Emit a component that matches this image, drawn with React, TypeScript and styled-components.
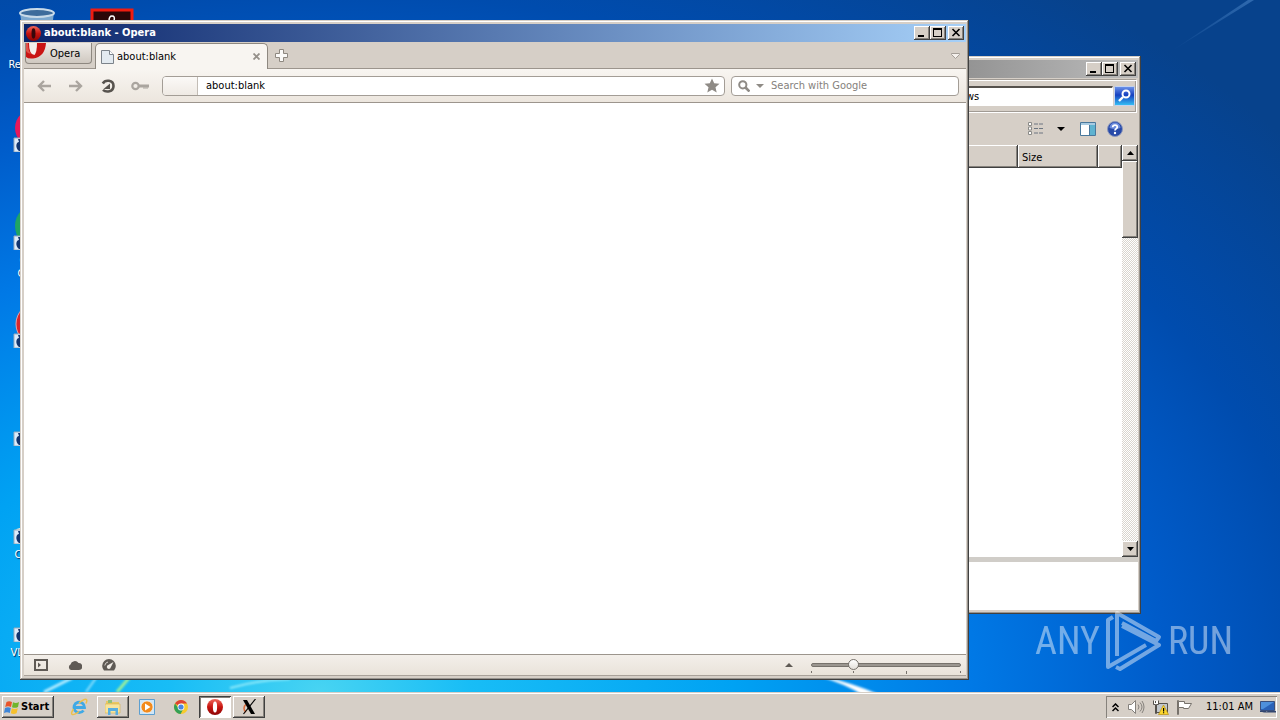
import React from "react";
import styled, { createGlobalStyle, css } from "styled-components";

const Global = createGlobalStyle`
  * { box-sizing: border-box; }
  body {
    margin: 0;
    font: 11px/14px "DejaVu Sans Condensed", Tahoma, "Liberation Sans", sans-serif;
    color: #000;
  }
  button, input { font: inherit; color: inherit; margin: 0; padding: 0; border: 0; outline: 0; border-radius: 0; }
  button { background: none; }
  svg { display: block; flex: none; }
`;

const face = "#d6cfc7";

const raised = css`
  background: ${face};
  box-shadow: inset -1px -1px #404040, inset 1px 1px #fff, inset -2px -2px #86827c;
`;

/* ---------- desktop ---------- */

const Desktop = styled.div`
  height: 100vh;
  display: flex;
  flex-direction: column;
  overflow: hidden;
`;

const Surface = styled.main`
  flex: 1;
  position: relative;
  background: radial-gradient(ellipse 1250px 875px at 25% 100%,
    #48d4f2 0%, #18bdf6 12%, #00a2f3 33%, #0079e6 52%, #005bc9 68%, #004cae 80%, #07428c 100%);
`;

const Wallpaper = styled.svg`
  position: absolute;
  inset: 0;
  width: 100%;
  height: 100%;
`;

const IconColumn = styled.ul`
  list-style: none;
  margin: 0;
  padding: 6px 0 0;
  width: 74px;
  position: absolute;
  top: 0;
  left: ${(p: { $left: number }) => p.$left}px;
`;

const IconItem = styled.li`
  height: 98px;
  display: flex;
  flex-direction: column;
  align-items: center;
  gap: 4px;
`;

const IconLabel = styled.span`
  width: 62px;
  text-align: center;
  line-height: 13px;
  color: #fff;
  text-shadow: 1px 1px 1px #002a60;
`;

/* ---------- windows ---------- */

const Window = styled.section<{ $inset: string }>`
  position: absolute;
  inset: ${(p) => p.$inset};
  display: flex;
  flex-direction: column;
  padding: 4px 3px 4px 4px;
  background: ${face};
  box-shadow: inset -1px -1px #404040, inset 1px 1px ${face}, inset -2px -2px #98948e, inset 2px 2px #fff;
`;

const TitleBar = styled.header<{ $active?: boolean }>`
  height: 18px;
  display: flex;
  align-items: center;
  gap: 2px;
  padding: 0 2px;
  color: #fff;
  background: ${(p) =>
    p.$active ? "linear-gradient(90deg, #0a246a, #a6d0f8)" : "linear-gradient(90deg, #808080, #bcbcbc)"};
`;

const Title = styled.h1`
  flex: 1;
  margin: 0;
  padding-left: 1px;
  font-size: 11px;
  line-height: 18px;
  font-weight: bold;
`;

const CaptionGroup = styled.div`
  display: flex;
`;

const CaptionButton = styled.button`
  ${raised}
  width: 16px;
  height: 14px;
  display: grid;
  place-items: center;
`;

const TabBar = styled.div`
  height: 27px;
  display: flex;
  padding: 1px 1px 0;
  border-bottom: 1px solid #9c958d;
`;

const MenuButton = styled.button`
  width: 67px;
  height: 21px;
  display: flex;
  gap: 4px;
  border: 1px solid #8e8880;
  border-top: 0;
  border-radius: 0 0 4px 4px;
  background: linear-gradient(#eeebe7, #cfc8c0);
  line-height: 22px;
  overflow: hidden;
`;

const Tab = styled.div`
  width: 173px;
  height: 26px;
  margin: 0 7px 0 3px;
  padding: 0 7px 0 5px;
  display: flex;
  align-items: center;
  gap: 3px;
  border: 1px solid #8e8880;
  border-bottom: 0;
  border-radius: 5px 5px 0 0;
  background: #f8f5f1;
`;

const TabName = styled.span`
  flex: 1;
`;

const PlainButton = styled.button<{ $w: number }>`
  width: ${(p) => p.$w}px;
  display: grid;
  place-items: center;
`;

const Spacer = styled.div`
  flex: 1;
`;

const NavBar = styled.nav`
  height: 34px;
  display: flex;
  align-items: center;
  padding: 0 7px 0 4px;
  border-bottom: 1px solid #9c958d;
  background: linear-gradient(#f8f5f1, #ece6de);
`;

const Field = styled.label<{ $w?: number }>`
  height: 20px;
  margin-left: 6px;
  flex: ${(p) => (p.$w ? `0 0 ${p.$w}px` : "1")};
  display: flex;
  align-items: center;
  border: 1px solid #a39d96;
  border-radius: 4px;
  background: #fff;
  overflow: hidden;
`;

const Badge = styled.span`
  width: 35px;
  align-self: stretch;
  border-right: 1px solid #c3bdb6;
  background: linear-gradient(#fbf9f7, #efeae4);
`;

const FieldInput = styled.input<{ $pad: number }>`
  flex: 1;
  min-width: 0;
  height: 18px;
  padding-left: ${(p) => p.$pad}px;
  background: none;
  &::placeholder { color: #85817c; opacity: 1; }
`;

const Page = styled.div`
  flex: 1;
  background: #fff;
`;

const StatusBar = styled.footer`
  height: 22px;
  display: flex;
  align-items: stretch;
  padding-right: 5px;
  border-top: 1px solid #9c958d;
  border-bottom: 1px solid #a9a29a;
  background: linear-gradient(#f3efea, #e9e3da);
`;

const Zoom = styled.div`
  width: 150px;
  margin-left: 11px;
  display: flex;
  flex-direction: column;
  padding-top: 4px;
`;

const Slider = styled.input`
  appearance: none;
  width: 100%;
  height: 12px;
  background: none;
  &::-webkit-slider-runnable-track {
    height: 4px;
    border-radius: 2px;
    background: #9b9690;
    border: 1px solid #77726c;
  }
  &::-webkit-slider-thumb {
    appearance: none;
    width: 11px;
    height: 11px;
    margin-top: -5px;
    border: 1px solid #77726c;
    border-radius: 50%;
    background: linear-gradient(#fff, #e4e0da);
  }
`;

/* ---------- explorer ---------- */

const AddressRow = styled.div`
  height: 34px;
  margin: 1px 1px 0 0;
  padding: 6px 1px;
  display: flex;
  gap: 1px;
  border: 1px solid #fff;
  border-top-color: #a19b94;
  box-shadow: inset 0 1px #fff, inset -1px -1px #a19b94;
`;

const ExplorerSearch = styled.input`
  flex: 1;
  min-width: 0;
  padding-left: 10px;
  background: #fff;
  border: 1px solid #fff;
  border-top: 2px solid #55514c;
  border-left: 2px solid #55514c;
`;

const ExplorerTools = styled.div`
  height: 32px;
  display: flex;
  justify-content: flex-end;
  align-items: center;
  padding-right: 10px;
`;

const ListArea = styled.div`
  flex: 1;
  display: flex;
  background: #fff;
`;

const Columns = styled.table`
  flex: 1;
  border-collapse: collapse;
  table-layout: fixed;
  align-self: flex-start;
`;

const ColumnHead = styled.th<{ $w?: number }>`
  ${raised}
  width: ${(p) => (p.$w ? `${p.$w}px` : "auto")};
  height: 23px;
  padding: 2px 4px 0;
  text-align: left;
  font-weight: normal;
`;

const ScrollBar = styled.div`
  width: 16px;
  display: flex;
  flex-direction: column;
  justify-content: space-between;
  background: repeating-conic-gradient(#fff 0% 25%, #d9d5ce 0% 50%) 0 0 / 2px 2px;
`;

const ScrollButton = styled.button`
  ${raised}
  width: 16px;
  height: 16px;
  display: grid;
  place-items: center;
`;

const ScrollThumb = styled.div`
  ${raised}
  height: 77px;
`;

const Details = styled.div`
  height: 53px;
  border-top: 5px solid #d0cdc8;
  background: #fff;
`;

/* ---------- watermark ---------- */

const Watermark = styled.div`
  position: absolute;
  right: 47px;
  bottom: 20px;
  height: 62px;
  display: flex;
  align-items: center;
  gap: 6px;
  font: 38px/62px "Liberation Sans Narrow", "Roboto Condensed", "Liberation Sans", sans-serif;
  color: #fff;
  opacity: 0.45;
`;

/* ---------- taskbar ---------- */

const TaskBar = styled.footer`
  height: 28px;
  position: relative;
  display: flex;
  align-items: center;
  padding: 2px 2px 0;
  background: ${face};
  box-shadow: inset 0 1px ${face}, inset 0 2px #fff;
`;

const StartButton = styled.button`
  ${raised}
  width: 52px;
  height: 22px;
  display: flex;
  align-items: center;
  gap: 1px;
  padding-left: 2px;
  margin-right: 9px;
  font-weight: bold;
  white-space: nowrap;
`;

const TaskButton = styled.button<{ $state?: "open" | "active" }>`
  width: 32px;
  height: 22px;
  margin-right: 2px;
  display: grid;
  place-items: center;
  ${(p) => p.$state === "open" && raised}
  ${(p) =>
    p.$state === "active" &&
    css`
      background: #fff;
      box-shadow: inset 1px 1px #404040, inset -1px -1px #fff, inset 2px 2px #86827c;
    `}
`;

const Tray = styled.div`
  height: 22px;
  margin-right: 1px;
  padding: 0 1px 0 4px;
  display: flex;
  align-items: center;
  gap: 7px;
  box-shadow: inset 1px 1px #86827c, inset -1px -1px #fff;
`;

const Clock = styled.time`
  margin-left: 6px;
`;

/* ---------- drawings ---------- */

const OperaMark = ({ size }: { size: number }) => (
  <svg width={size} height={size} viewBox="0 0 16 16">
    <defs>
      <linearGradient id={`op${size}`} x1="0" y1="0" x2="0" y2="1">
        <stop offset="0" stopColor="#f0685c" />
        <stop offset=".5" stopColor="#c8140f" />
        <stop offset="1" stopColor="#8c0505" />
      </linearGradient>
    </defs>
    <circle cx="8" cy="8" r="8" fill={`url(#op${size})`} />
    <path fill={size === 15 ? "#36080c" : "#fff"} d="M8 2.500C6.400 2.500 5.900 4.500 5.900 8S6.400 13.500 8 13.500 10.100 11.500 10.100 8 9.600 2.500 8 2.500Z" />
  </svg>
);

const ShortcutArrow = () => (
  <g>
    <path d="M1 34h14v14H1z" fill="#dcebfa" stroke="#9ab" strokeWidth="1" />
    <path d="M6 47c-4-3-3-9 0-9l-1-3h7l2 6-5 2c-2 1-1 3 0 4Z" fill="#12356f" />
  </g>
);

const DeskIcon = ({ children, shortcut = true }: { children?: React.ReactNode; shortcut?: boolean }) => (
  <svg width="48" height="48" viewBox="0 0 48 48">
    {children}
    {shortcut && <ShortcutArrow />}
  </svg>
);

const Captions = () => (
  <>
    <CaptionGroup>
      <CaptionButton aria-label="Minimize">
        <svg width="16" height="14"><path d="M4 9h6v2H4z" /></svg>
      </CaptionButton>
      <CaptionButton aria-label="Maximize">
        <svg width="16" height="14"><path fillRule="evenodd" d="M3 2h9v9H3zM4 4v6h7V4z" /></svg>
      </CaptionButton>
    </CaptionGroup>
    <CaptionButton aria-label="Close">
      <svg width="16" height="14"><path d="m4.500 3 7 7m0-7-7 7" stroke="#000" strokeWidth="1.600" /></svg>
    </CaptionButton>
  </>
);

const PlayLogo = () => (
  <svg width="56" height="62" viewBox="0 0 56 62" fill="none" stroke="#fff" strokeWidth="4" strokeLinejoin="round">
    <path d="M7 7 2 10v47l38-22" />
    <path d="M11 46V3l42 24-3 4-34-18" />
    <path d="m16 16 37 19-39 24-4-2" />
  </svg>
);

export default function App() {
  return (
    <Desktop>
      <Global />
      <Surface>
        <Wallpaper viewBox="0 0 1280 692" preserveAspectRatio="none" aria-hidden="true">
          <defs>
            <filter id="soft"><feGaussianBlur stdDeviation="1" /></filter>
            <linearGradient id="ray" x1="0" y1="1" x2="1" y2="0">
              <stop offset="0" stopColor="#8cc4ff" stopOpacity="0" />
              <stop offset="1" stopColor="#8cc4ff" stopOpacity=".3" />
            </linearGradient>
          </defs>
          <path d="m1170 52 78-52h6z" fill="url(#ray)" />
          <g filter="url(#soft)">
            <path d="m44 692 28-14" stroke="#b4ecff" strokeWidth="3" />
            <path d="m86 692 10-14" stroke="#8fe0fc" strokeWidth="2" />
            <path d="m117 692 12-14" stroke="#9df09a" strokeWidth="3" />
            <path d="M822 676q30 7 56 18l-14 2q-18-12-46-20z" fill="#fff" />
            <path d="M230 688q28-8 60-9" stroke="#90eafa" strokeWidth="2" fill="none" />
          </g>
        </Wallpaper>

        <IconColumn $left={0}>
          <IconItem>
            <DeskIcon shortcut={false}>
              <path d="M7 6h34l-5 40H12z" fill="#7ca8cf" />
              <ellipse cx="24" cy="7" rx="17" ry="4" fill="#3d6c9c" stroke="#c9dbe9" strokeWidth="2" />
            </DeskIcon>
            <IconLabel>Recycle Bin</IconLabel>
          </IconItem>
          <IconItem>
            <DeskIcon><ellipse cx="24" cy="24" rx="22" ry="20" fill="#e8195a" /></DeskIcon>
          </IconItem>
          <IconItem>
            <DeskIcon><circle cx="24" cy="24" r="22" fill="#1fa463" /></DeskIcon>
            <IconLabel>Google Chrome</IconLabel>
          </IconItem>
          <IconItem>
            <DeskIcon><circle cx="24" cy="24" r="21" fill="#d8262c" stroke="#e9a0a4" /></DeskIcon>
          </IconItem>
          <IconItem><DeskIcon /></IconItem>
          <IconItem>
            <DeskIcon><path d="M2 34q12-6 30-3v6H2z" fill="#e9efe6" /></DeskIcon>
            <IconLabel>CCleaner</IconLabel>
          </IconItem>
          <IconItem>
            <DeskIcon />
            <IconLabel>VLC media</IconLabel>
          </IconItem>
        </IconColumn>
        <IconColumn $left={75}>
          <IconItem>
            <DeskIcon shortcut={false}>
              <path d="M4 4h40v40H4z" fill="#2c0708" stroke="#f01c10" strokeWidth="3" />
              <path d="M21 15c0-4 1-5 3-5s3 1 2 5" fill="none" stroke="#fff" strokeWidth="1.500" />
            </DeskIcon>
          </IconItem>
        </IconColumn>

        <Window $inset="56px 139px 78px 880px" aria-label="Explorer">
          <TitleBar>
            <Spacer />
            <Captions />
          </TitleBar>
          <AddressRow>
            <ExplorerSearch aria-label="Search" defaultValue="Search Windows" />
            <PlainButton $w={21} aria-label="Go">
              <svg width="21" height="20" viewBox="0 0 21 20">
                <defs>
                  <linearGradient id="go" x1="0" y1="0" x2="0" y2="1">
                    <stop offset="0" stopColor="#6f95ea" />
                    <stop offset=".45" stopColor="#1640c0" />
                    <stop offset="1" stopColor="#35c3f6" />
                  </linearGradient>
                </defs>
                <rect x=".5" y=".5" width="20" height="19" rx="1" fill="url(#go)" stroke="#c3d3f0" />
                <circle cx="12" cy="8" r="3.500" fill="none" stroke="#fff" strokeWidth="2" />
                <path d="m9 11-4 4" stroke="#fff" strokeWidth="2.400" />
              </svg>
            </PlainButton>
          </AddressRow>
          <ExplorerTools>
            <PlainButton $w={24} aria-label="Views">
              <svg width="16" height="14" viewBox="0 0 16 14" fill="none">
                <path d="M.5.500h3v3h-3zM.5 5h3v3h-3zM.5 9.500h3v3h-3z" stroke="#8b8b88" fill="#fff" />
                <path d="M6 2h4m1 0h4M6 6.500h4m1 0h4M6 11h4m1 0h4" stroke="#6c7580" />
              </svg>
            </PlainButton>
            <PlainButton $w={25} aria-label="More views">
              <svg width="8" height="4"><path d="M0 0h8L4 4z" /></svg>
            </PlainButton>
            <PlainButton $w={29} aria-label="Preview pane">
              <svg width="16" height="14" viewBox="0 0 16 14">
                <path d="M.5.500h15v13H.5z" fill="#fff" stroke="#49789c" />
                <path d="M10 3h5v10h-5z" fill="#5fb3d0" /><path d="M1 1h14v2H1z" fill="#a8cbe2" />
                <path d="M9.500 3v10" stroke="#49789c" />
              </svg>
            </PlainButton>
            <PlainButton $w={26} aria-label="Help">
              <svg width="16" height="16" viewBox="0 0 16 16">
                <circle cx="8" cy="8" r="7.500" fill="#2749a8" stroke="#8b97bc" />
                <path d="M2.500 7a5.500 5.500 0 0 1 11 0Q8 9 2.500 7" fill="#6c8bdc" />
                <path d="M5.700 6.200C5.800 3.500 10.300 3.500 10.300 6c0 1.700-2.300 1.600-2.300 3.600" fill="none" stroke="#fff" strokeWidth="1.800" />
                <circle cx="8" cy="12" r="1.200" fill="#fff" />
              </svg>
            </PlainButton>
          </ExplorerTools>
          <ListArea>
            <Columns>
              <thead>
                <tr>
                  <ColumnHead />
                  <ColumnHead $w={80}>Size</ColumnHead>
                  <ColumnHead $w={24} />
                </tr>
              </thead>
            </Columns>
            <ScrollBar>
              <div>
                <ScrollButton aria-label="Scroll up">
                  <svg width="7" height="4"><path d="M0 4h7L3.500 0z" /></svg>
                </ScrollButton>
                <ScrollThumb />
              </div>
              <ScrollButton aria-label="Scroll down">
                <svg width="7" height="4"><path d="M0 0h7L3.500 4z" /></svg>
              </ScrollButton>
            </ScrollBar>
          </ListArea>
          <Details />
        </Window>

        <Window $inset="20px 311px 12px 20px" aria-label="Opera">
          <TitleBar $active>
            <OperaMark size={15} />
            <Title>about:blank - Opera</Title>
            <Captions />
          </TitleBar>
          <TabBar>
            <MenuButton>
              <svg width="20" height="17" viewBox="0 0 20 17">
                <path d="M0 0h20q-1 14-13 15.500Q2 16 0 14z" fill="#c91414" />
                <path d="M3 0h8q0 9-2.500 12Q3 12 3 0Z" fill="#f3efec" />
                <path d="M0 0h2q0 8 3 11-3 0-5-3z" fill="#e05048" />
              </svg>
              Opera
            </MenuButton>
            <Tab>
              <svg width="13" height="14" viewBox="0 0 13 14">
                <path d="M.5.500h8l4 4v9H.5z" fill="#e3eaf0" stroke="#7c838a" />
                <path d="M8.500.500v4h4" fill="#fff" stroke="#7c838a" />
              </svg>
              <TabName>about:blank</TabName>
              <PlainButton $w={7} aria-label="Close tab">
                <svg width="7" height="7"><path d="m.500.500 6 6m0-6-6 6" stroke="#96918b" strokeWidth="1.800" /></svg>
              </PlainButton>
            </Tab>
            <PlainButton $w={13} aria-label="New tab">
              <svg width="13" height="13" viewBox="0 0 13 13">
                <path d="M4.500.500h4v4h4v4h-4v4h-4v-4h-4v-4h4z" fill="#fbfaf8" stroke="#8e8880" />
              </svg>
            </PlainButton>
            <Spacer />
            <PlainButton $w={19} aria-label="Closed tabs">
              <svg width="9" height="6" viewBox="0 0 9 6"><path d="M.5.500h8v1l-4 4-4-4z" fill="#f4f0ec" stroke="#a39d96" /></svg>
            </PlainButton>
          </TabBar>
          <NavBar>
            <PlainButton $w={32} aria-label="Back">
              <svg width="14" height="12" viewBox="0 0 14 12" fill="none" stroke="#aaa59f" strokeWidth="2.400"><path d="M14 6H2.500M7 1 2 6l5 5" /></svg>
            </PlainButton>
            <PlainButton $w={32} aria-label="Forward">
              <svg width="14" height="12" viewBox="0 0 14 12" fill="none" stroke="#aaa59f" strokeWidth="2.400"><path d="M0 6h11.500M7 1l5 5-5 5" /></svg>
            </PlainButton>
            <PlainButton $w={32} aria-label="Reload">
              <svg width="14" height="14" viewBox="0 0 14 14" fill="none">
                <path d="M1.800 4.500C4 .500 12.500.500 12.500 7c0 6-7.500 6.800-10.500 3.800" stroke="#57534e" strokeWidth="2.600" />
                <path d="M9 4.500V10H2.500z" fill="#57534e" />
              </svg>
            </PlainButton>
            <PlainButton $w={32} aria-label="Passwords">
              <svg width="18" height="10" viewBox="0 0 18 10" fill="none" stroke="#aaa59f">
                <circle cx="4.500" cy="5" r="3.200" strokeWidth="2.200" />
                <path d="M8 5h10" strokeWidth="3" /><path d="M12 7h5" strokeWidth="1" />
              </svg>
            </PlainButton>
            <Field>
              <Badge />
              <FieldInput $pad={8} aria-label="Address" defaultValue="about:blank" />
              <PlainButton $w={24} aria-label="Bookmark">
                <svg width="16" height="15" viewBox="0 0 16 15">
                  <path d="m8 .500 2.200 4.800 5.300.500-4 3.500 1.200 5.200L8 11.800l-4.700 2.700 1.200-5.200-4-3.500 5.300-.500z" fill="#8f8b86" />
                </svg>
              </PlainButton>
            </Field>
            <Field $w={228}>
              <PlainButton $w={24} aria-label="Search">
                <svg width="12" height="12" viewBox="0 0 12 12" fill="none" stroke="#8f8b86">
                  <circle cx="4.800" cy="4.800" r="3.600" strokeWidth="2" /><path d="m7.500 7.500 4 4" strokeWidth="2.600" />
                </svg>
              </PlainButton>
              <PlainButton $w={8} aria-label="Search engine">
                <svg width="8" height="4"><path d="M0 0h8L4 4z" fill="#8f8b86" /></svg>
              </PlainButton>
              <FieldInput $pad={7} aria-label="Search the web" placeholder="Search with Google" />
            </Field>
          </NavBar>
          <Page />
          <StatusBar>
            <PlainButton $w={34} aria-label="Panels">
              <svg width="14" height="12" viewBox="0 0 14 12">
                <rect x="1" y="1" width="12" height="10" fill="none" stroke="#5f5a55" strokeWidth="2" />
                <path d="M4 3.500 7 6 4 8.500z" fill="#5f5a55" />
              </svg>
            </PlainButton>
            <PlainButton $w={34} aria-label="Sync">
              <svg width="14" height="10" viewBox="0 0 14 10">
                <path d="M3 10a3 3 0 0 1-.500-5.500A4.500 4.500 0 0 1 10.500 3 3.500 3.500 0 0 1 11 10z" fill="#5f5a55" />
              </svg>
            </PlainButton>
            <PlainButton $w={34} aria-label="Turbo">
              <svg width="14" height="12" viewBox="0 0 14 12">
                <path d="M2 11.500A6.800 6.800 0 1 1 12 11.500z" fill="#5f5a55" />
                <path d="M11.500 3 8.800 8.200A2 2 0 1 1 6.200 6z" fill="#f0ece6" />
                <path d="M2.800 6.500A4 4 0 0 1 6 3" fill="none" stroke="#d6d1cb" />
              </svg>
            </PlainButton>
            <Spacer />
            <PlainButton $w={22} aria-label="View options">
              <svg width="8" height="4"><path d="M0 4h8L4 0z" fill="#5f5a55" /></svg>
            </PlainButton>
            <Zoom>
              <Slider type="range" aria-label="Zoom" min={0} max={100} defaultValue={26} />
              <svg width="150" height="3"><path d="M0 0h1v2H0zM42 0h1v2h-1zM95 0h1v3h-1zM149 0h1v2h-1z" fill="#77726c" /></svg>
            </Zoom>
          </StatusBar>
        </Window>

        <Watermark>
          <span>ANY</span>
          <PlayLogo />
          <span>RUN</span>
        </Watermark>
      </Surface>

      <TaskBar>
        <StartButton>
          <svg width="16" height="15" viewBox="0 0 16 15">
            <path d="M2.500 2Q5 .500 8 2L7 7Q4 5.500 1.200 7z" fill="#e8542a" />
            <path d="M9 2.300q3 1.500 6-.300L14 7q-3 1.600-6 .200z" fill="#6fb52c" />
            <path d="M1 8q3-1.500 5.800 0l-1 5Q3 11.500 0 13z" fill="#3f86d8" />
            <path d="M7.800 8.300q3 1.400 6 0l-1.200 5q-3 1.600-5.800 0z" fill="#f6c02c" />
          </svg>
          Start
        </StartButton>
        <TaskButton aria-label="Internet Explorer">
          <svg width="18" height="18" viewBox="0 0 18 18" fill="none">
            <path d="M13.500 12.500A5.300 5.300 0 1 1 14.500 9.500H5" stroke="#3fa9e6" strokeWidth="2.800" />
            <path d="M3.500 11C-1 18 3 18 9 13.500M9 5C15 0 18.500 0 16 5.500" stroke="#ecc04a" strokeWidth="1.500" />
          </svg>
        </TaskButton>
        <TaskButton $state="open" aria-label="Windows Explorer">
          <svg width="16" height="16" viewBox="0 0 16 16">
            <path d="M1 2h5l1 1h7v4H1z" fill="#e9c862" /><path d="M3 1h4v3H3z" fill="#8fc07a" />
            <path d="M0 5h15v9H0z" fill="#f7e49c" stroke="#d6b34e" strokeWidth=".600" />
            <path d="M3 16V9h10v7h-2.500v-4h-5v4z" fill="#58aee0" />
          </svg>
        </TaskButton>
        <TaskButton aria-label="Media Player">
          <svg width="16" height="16" viewBox="0 0 16 16">
            <path d="M.5.500h15v15H.5z" fill="#cfe6f7" stroke="#5d9fd0" />
            <circle cx="8" cy="8" r="6" fill="#f28a1c" stroke="#fff" strokeWidth=".600" /><path d="m6 4.500 5.500 3.500L6 11.500z" fill="#fff" />
          </svg>
        </TaskButton>
        <TaskButton aria-label="Chrome">
          <svg width="14" height="14" viewBox="0 0 14 14">
            <circle cx="7" cy="7" r="7" fill="#f7cb2d" />
            <path d="M7 7 1 3.400A7 7 0 0 1 13 3.500H7z" fill="#de4334" />
            <path d="M7 7H3.600L1 3.400A7 7 0 0 0 6.600 14L9.500 8.500z" fill="#33a056" />
            <circle cx="7" cy="7" r="3.400" fill="#fff" /><circle cx="7" cy="7" r="2.600" fill="#4a86e0" />
          </svg>
        </TaskButton>
        <TaskButton $state="active" aria-label="Opera browser"><OperaMark size={16} /></TaskButton>
        <TaskButton $state="open" aria-label="X">
          <svg width="16" height="16" viewBox="0 0 16 16">
            <path d="M5 5.500A4.500 4.500 0 0 0 5 13M11 4.500" stroke="#dd7040" strokeWidth="1.600" fill="none" />
            <path d="M2 1h4l8 14h-4z" /><path d="m14.500 0-12 15" stroke="#000" strokeWidth="1.200" />
          </svg>
        </TaskButton>
        <Spacer />
        <Tray>
          <PlainButton $w={11} aria-label="Show hidden icons">
            <svg width="7" height="9" viewBox="0 0 7 9" fill="none" stroke="#000" strokeWidth="1.500"><path d="m.500 4 3-3 3 3M.5 8l3-3 3 3" /></svg>
          </PlainButton>
          <svg width="17" height="14" viewBox="0 0 17 14" fill="none" stroke="#85817c">
            <path d="M.5 4.500h3l4-4v13l-4-4h-3z" fill="#fff" /><path d="M10 4.500q2 2.500 0 5M12 2.500q4 4.500 0 9M14 1q4 6 0 12" />
          </svg>
          <svg width="17" height="15" viewBox="0 0 17 15">
            <path d="M4.500 3.500h11v9h-11z" fill="#c2c7cc" stroke="#55514c" />
            <path d="M1.500.500v4h2v9h1v-9h2v-4M3.500 1v2" fill="#fff" stroke="#55514c" />
            <path d="m11.500 5 5 9.500h-10z" fill="#fbd62e" stroke="#b99112" strokeWidth=".700" /><path d="M11 8h1.200v3.500H11zM11 12.300h1.200v1H11z" />
          </svg>
          <svg width="17" height="15" viewBox="0 0 17 15" fill="#fff" stroke="#77726c">
            <path d="M1.500.500h1v14h-1z" /><path d="M2.500 1.500h6v2h7l-3 5h-5v-1h-5z" />
          </svg>
          <Clock>11:01 AM</Clock>
          <svg width="16" height="13" viewBox="0 0 16 13">
            <path d="M.5.500h14v9H.5z" fill="#2a62b8" stroke="#3a4f7c" /><path d="M1 1h13L3 8H1z" fill="#4e90dc" />
            <path d="M0 10h6v1H0zM2 11.500h14V10H8z" fill="#32466e" />
          </svg>
        </Tray>
      </TaskBar>
    </Desktop>
  );
}
